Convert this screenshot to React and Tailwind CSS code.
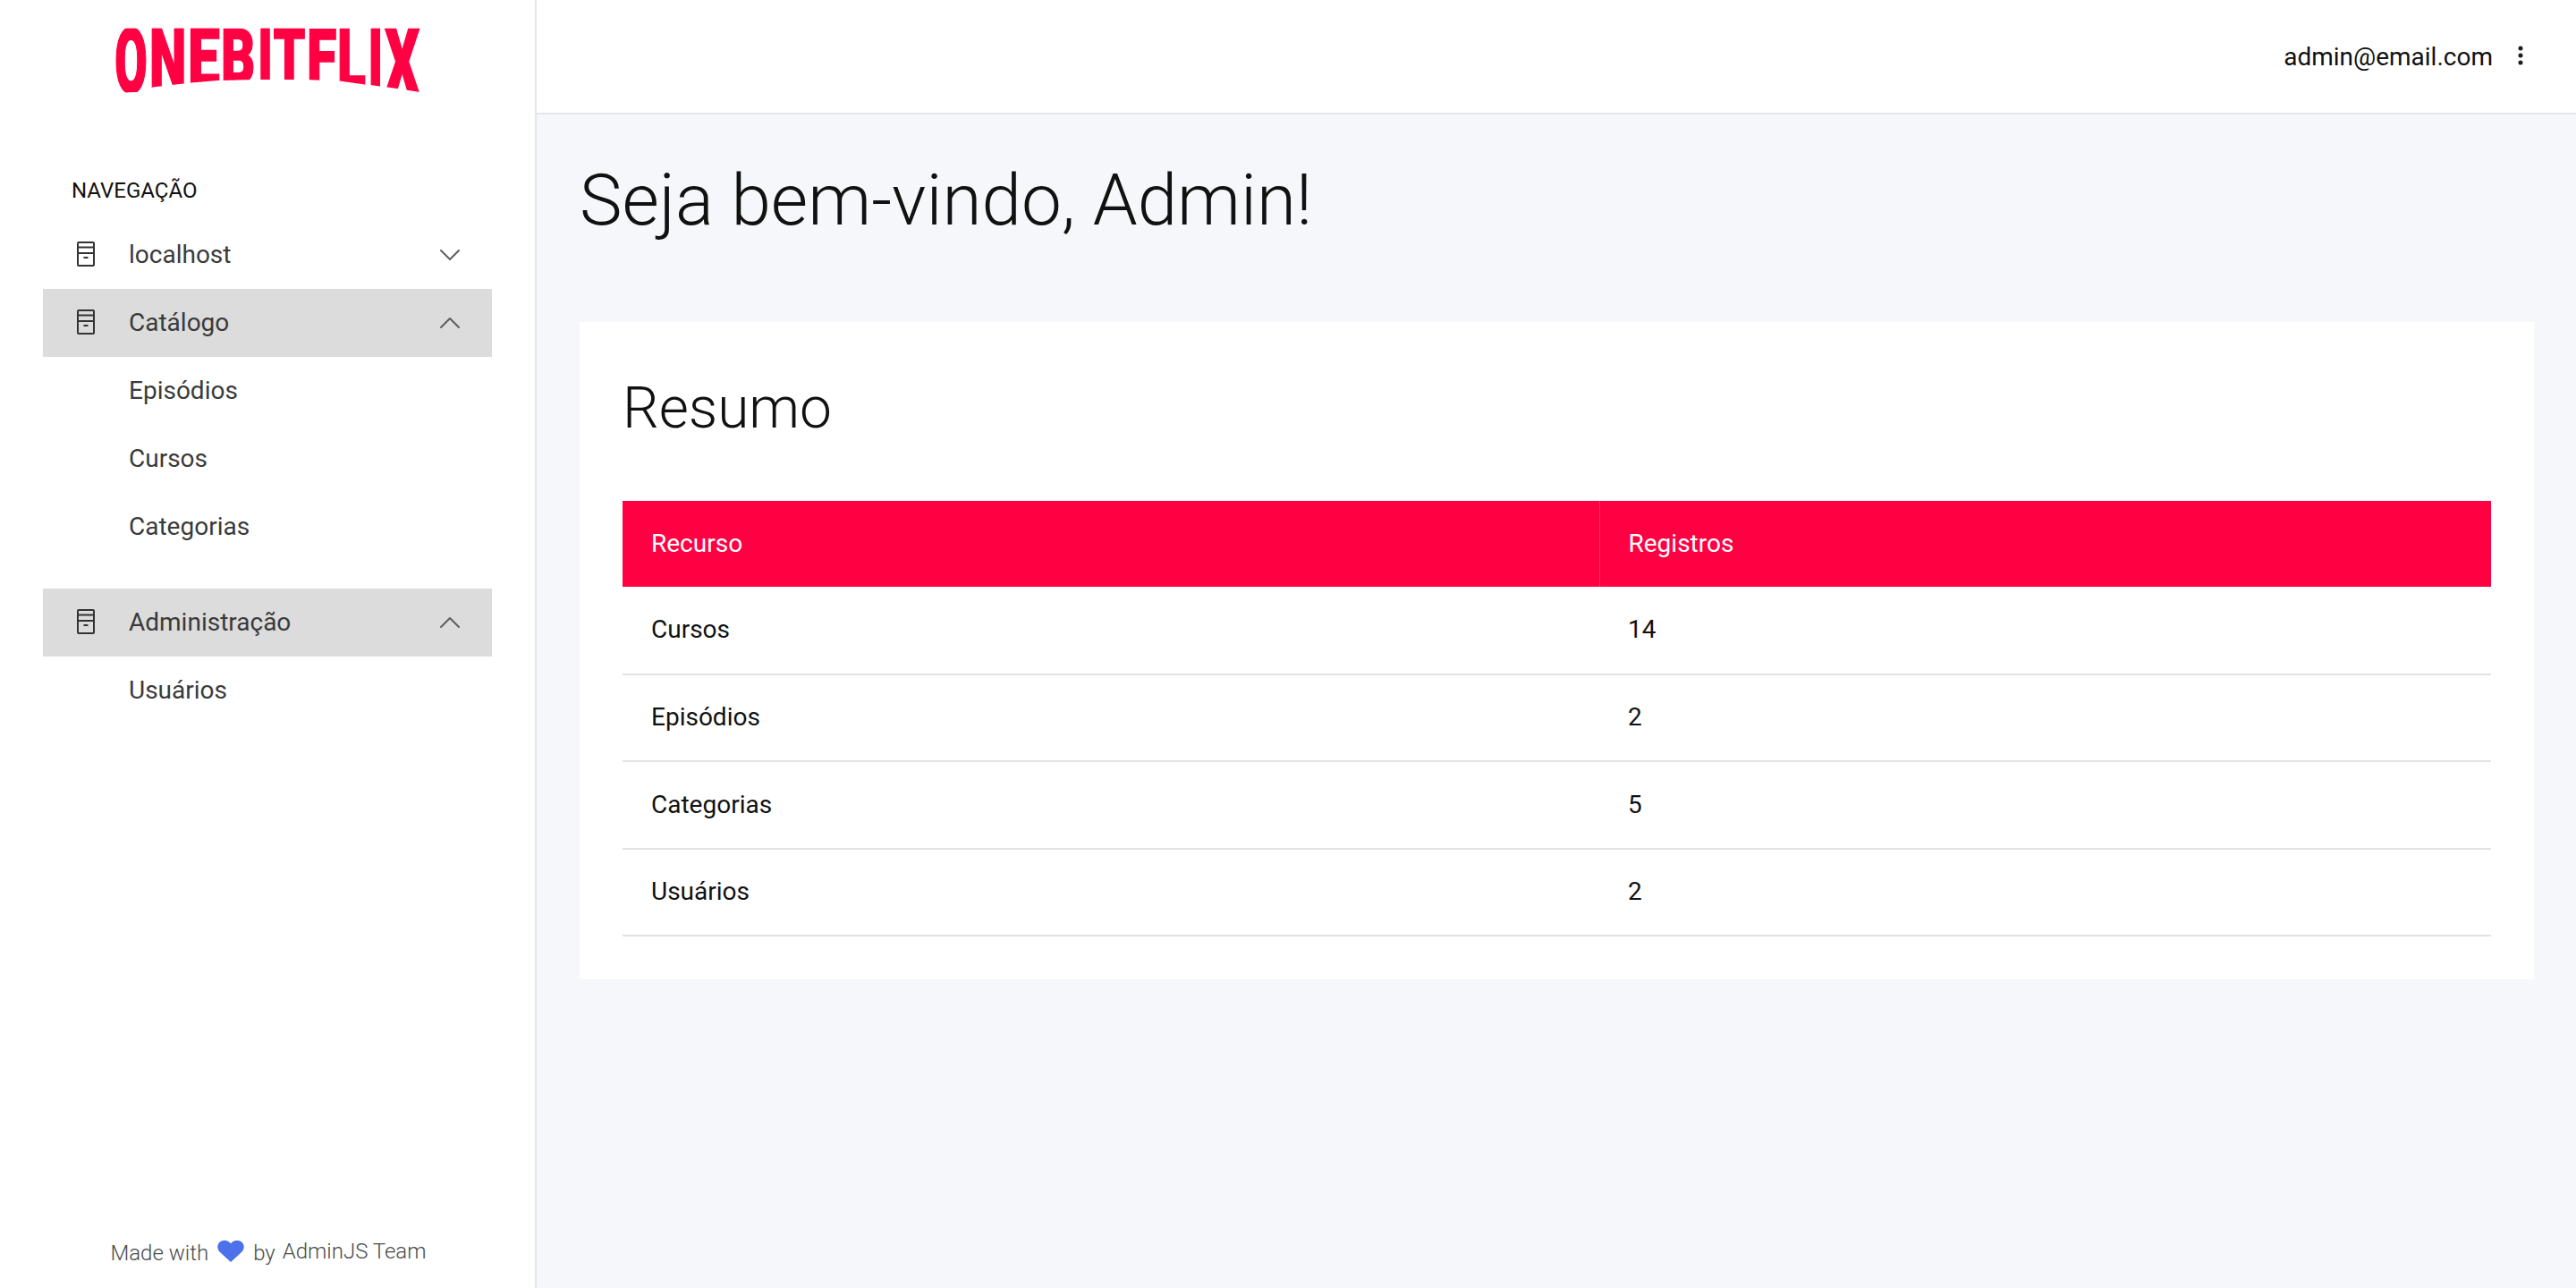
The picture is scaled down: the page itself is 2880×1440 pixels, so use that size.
import React from "react"
import { ChevronDown, ChevronUp } from "lucide-react"

// letters of the arched logo: left edge, ink width, height, plus the glyph's
// left bearing and ink width in Roboto Black at 100px
const logoLetters = [
  { c: "O", x: 30, w: 33.3, h: 69, lsb: 3.5, ink: 63 },
  { c: "N", x: 70, w: 35.3, h: 65, lsb: 5, ink: 60 },
  { c: "E", x: 113.3, w: 30, h: 60, lsb: 5, ink: 47 },
  { c: "B", x: 150, w: 33.3, h: 58, lsb: 5, ink: 56 },
  { c: "I", x: 190.7, w: 11, h: 57, lsb: 4.5, ink: 20 },
  { c: "T", x: 206, w: 34.7, h: 57, lsb: 1, ink: 61 },
  { c: "F", x: 246, w: 28, h: 58, lsb: 5, ink: 46 },
  { c: "L", x: 280, w: 28.3, h: 62, lsb: 5, ink: 48 },
  { c: "I", x: 314, w: 11, h: 64, lsb: 4.5, ink: 20 },
  { c: "X", x: 330.5, w: 40, h: 71, lsb: 1, ink: 65 },
]

const Logo = () => (
  <svg width="400" height="110" viewBox="0 0 400 110" className="block" aria-label="ONEBITFLIX">
    <defs>
      <clipPath id="logo-arch">
        <polygon points="20,21.7 380,21.7 380,93 370,93 330,87 325,86.500 314,85 308,84.500 280,80.500 241,79 183,79 143,80 113,82.500 105,83.500 70,87.500 66,92.500 20,94" />
      </clipPath>
    </defs>
    <g clipPath="url(#logo-arch)">
      {logoLetters.map((l, i) => {
        const sx = l.w / l.ink
        const sy = (l.h + 3) / 71
        return (
          <text
            key={i}
            transform={`translate(${l.x - l.lsb * sx} ${21.7 + l.h + 3}) scale(${sx} ${sy})`}
            fontFamily="Roboto, sans-serif"
            fontWeight="900"
            fontSize="100"
            fill="#ff0043"
            stroke="#ff0043"
            strokeWidth="1.8"
          >
            {l.c}
          </text>
        )
      })}
    </g>
  </svg>
)

const ServerIcon = () => (
  <svg width="20" height="28" viewBox="0 0 20 28" fill="none" stroke="#333333" strokeWidth="2" className="mb-[2px] shrink-0">
    <rect x="1" y="1" width="18" height="26" rx="1" />
    <path d="M1 6.500h18M1 13h18" />
    <path d="M7.500 18h5" />
  </svg>
)

const NavGroup = ({ label, open, active }) => (
  <div className={`flex h-[76px] items-center pl-[38px] pr-[27px] ${active ? "bg-[#dcdcdc]" : ""}`}>
    <ServerIcon />
    <span className="ml-[38px] flex-1 text-[28px] text-[#3a3a3a]">{label}</span>
    {open ? (
      <ChevronUp size={40} strokeWidth={1.2} className="text-[#5f5f5f]" />
    ) : (
      <ChevronDown size={40} strokeWidth={1.2} className="text-[#5f5f5f]" />
    )}
  </div>
)

const NavLink = ({ label }) => (
  <div className="flex h-[76px] items-center pl-[96px] text-[28px] text-[#3a3a3a]">{label}</div>
)

const rows = [
  ["Cursos", "14"],
  ["Episódios", "2"],
  ["Categorias", "5"],
  ["Usuários", "2"],
]

export default function App() {
  return (
    <div className="flex h-screen w-full overflow-hidden bg-[#f6f7fb] font-['Roboto',sans-serif] text-[#111111]">
      <aside className="flex w-[600px] shrink-0 flex-col border-r-2 border-[#e4e6ee] bg-white">
        <div className="pl-[100px] pt-[10px]">
          <Logo />
        </div>
        <nav className="mt-[73px] flex flex-col px-[48px]">
          <h5 className="mb-[14px] ml-[32px] text-[24px] uppercase leading-[40px] text-[#111111]">Navegação</h5>
          <NavGroup label="localhost" />
          <NavGroup label="Catálogo" open active />
          <NavLink label="Episódios" />
          <NavLink label="Cursos" />
          <NavLink label="Categorias" />
          <div className="h-[31px]" />
          <NavGroup label="Administração" open active />
          <NavLink label="Usuários" />
        </nav>
        <div className="mt-auto flex items-center justify-center pb-[20px] pl-[2px] text-[24px] font-light text-[#4a4a4a]">
          <span>Made with</span>
          <svg width="30" height="26" viewBox="0 0 30 28" preserveAspectRatio="none" className="mx-[10px] mb-[4px]">
            <path
              d="M15 27 2.500 14.500C-.5 11-.3 6 2.500 3c3-3 8-3 11 0L15 4.500 16.500 3c3-3 8-3 11 0 2.800 3 3 8 0 11.500L15 27Z"
              fill="#4d70eb"
            />
          </svg>
          <span>by</span>
          <span className="mb-[3px] ml-[8px]">AdminJS Team</span>
        </div>
      </aside>

      <main className="flex min-w-0 flex-1 flex-col">
        <header className="flex h-[128px] items-center justify-end border-b-2 border-[#e4e6ee] bg-white pr-[58px]">
          <span className="mt-[2px] text-[28px] leading-none">admin@email.com</span>
          <svg width="8" height="24" viewBox="0 0 8 24" className="mb-[2px] ml-[27px]" fill="#1c1c1c">
            <circle cx="4" cy="4" r="2.500" />
            <circle cx="4" cy="12" r="2.500" />
            <circle cx="4" cy="20" r="2.500" />
          </svg>
        </header>
        <div className="pl-[48px] pr-[47px]">
          <h1 className="mt-[52px] text-[80px] font-light leading-[88px]">Seja bem-vindo, Admin!</h1>
          <section className="mt-[92px] bg-white p-[48px]">
            <h2 className="pt-[5px] text-[64px] font-light leading-[88px]">Resumo</h2>
            <table className="mt-[59px] w-full table-fixed border-collapse text-[28px]">
              <thead>
                <tr className="h-[96px] bg-[#ff0043] text-left text-white">
                  <th className="w-[1092px] border-r border-[#ff3368] pl-[32px] font-normal">Recurso</th>
                  <th className="pl-[32px] font-normal">Registros</th>
                </tr>
              </thead>
              <tbody>
                {rows.map(([name, count]) => (
                  <tr key={name} className="h-[97.5px] border-b-2 border-[#e2e2e2]">
                    <td className="pl-[32px]">{name}</td>
                    <td className="pl-[32px]">{count}</td>
                  </tr>
                ))}
              </tbody>
            </table>
          </section>
        </div>
      </main>
    </div>
  )
}
